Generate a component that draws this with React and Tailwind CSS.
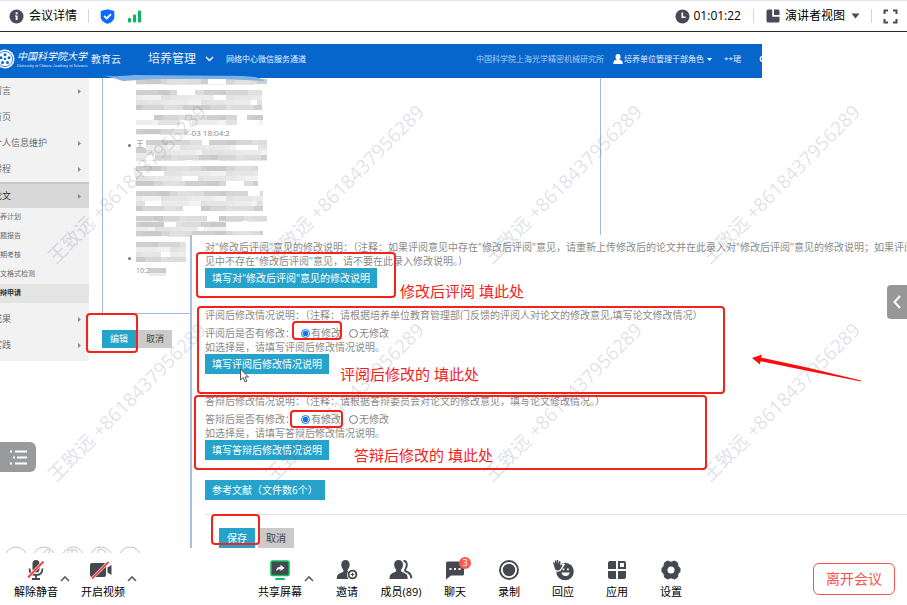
import React from "react";

const MENU = [
  { label: "留言", arrow: true },
  { label: "首页", arrow: false },
  { label: "个人信息维护", arrow: true },
  { label: "课程", arrow: true },
];
const SUBMENU = ["培养计划", "开题报告", "中期考核", "论文格式检测", "答辩申请"];
const MENU_END = ["成果", "实践"];

// Bands of blurred text: x, y, width, height
const BANDS = [
  [0, 0, 131, 6],
  [0, 11, 126, 20],
  [0, 36, 101, 10],
  [111, 36, 16, 10],
  [0, 50, 52, 6],
  [10, 61, 121, 21],
  [0, 69, 10, 13],
  [0, 87, 122, 20],
  [0, 112, 127, 20],
  [0, 137, 131, 6],
  [0, 143, 90, 9],
  [0, 152, 127, 6],
  [0, 163, 50, 20],
  [13, 189, 17, 8],
];

const LIGHT = ["#e6e6e6", "#ececec", "#e2e2e2", "#e9e9e9", "#f2f2f2"];
const DARK = ["#cfcfcf", "#d6d6d6", "#dcdcdc", "#cacaca", "#e0e0e0"];
const WIDTHS = [9, 16, 6, 22, 12, 7, 18];

function Mosaic() {
  const cells = [];
  BANDS.forEach(([x, y, w, h], b) => {
    for (let j = 0, row = 0; j < h; j += 5, row += 1) {
      const shades = row % 3 === 0 ? DARK : LIGHT;
      for (let i = 0, k = b * 3 + row * 2; i < w; k += 1) {
        const cw = Math.min(WIDTHS[k % 7], w - i);
        if ((k * 5 + row) % 13 !== 4) {
          cells.push(
            <rect
              key={b + "-" + i + "-" + j}
              x={x + i}
              y={y + j}
              width={cw}
              height={Math.min(5, h - j)}
              fill={shades[(k * 3 + b) % 5]}
            />
          );
        }
        i += cw;
      }
    }
  });
  return (
    <svg className="block" width="131" height="198" viewBox="0 0 131 198" aria-hidden="true">
      {cells}
    </svg>
  );
}

function TopBar() {
  return (
    <header className="flex h-8 shrink-0 items-center justify-between border-t border-b border-t-[#e4e6ee] border-b-[#23262e] bg-white pr-[9px] pl-[9px] text-xs text-black">
      <div className="flex items-center">
        <svg width="15" height="15" viewBox="0 0 15 15" aria-hidden="true">
          <circle cx="7.500" cy="7.500" r="7" fill="#474b57" />
          <rect x="6.600" y="3.300" width="2" height="2" fill="#fff" />
          <path d="M6 6.500h2.600v4.500H6.700V7.500H6z" fill="#fff" />
        </svg>
        <span className="ml-[5px]">会议详情</span>
        <span className="mx-[11px] h-[14px] w-px bg-[#d3d5da]" />
        <svg width="15" height="15" viewBox="0 0 15 15" aria-hidden="true">
          <path d="M7.500 0.300L14.300 2v6c0 3.400-3 5.400-6.800 6.900C3.700 13.400.7 11.400.7 8V2z" fill="#0a6cff" />
          <path d="M4.200 7l2.500 2.400L11 5.200" stroke="#fff" strokeWidth="1.800" fill="none" />
        </svg>
        <svg className="ml-3" width="15" height="13" viewBox="0 0 15 13" aria-hidden="true">
          <rect x="1" y="8" width="3" height="4.500" rx="1" fill="#07b85a" />
          <rect x="6" y="4.500" width="3" height="8" rx="1" fill="#07b85a" />
          <rect x="11" y="0.500" width="3" height="12" rx="1" fill="#07b85a" />
        </svg>
      </div>
      <div className="flex items-center">
        <svg width="15" height="15" viewBox="0 0 15 15" aria-hidden="true">
          <circle cx="7.500" cy="7.500" r="7" fill="#474b57" />
          <path d="M7.300 3.500v4.700h3.400" stroke="#fff" strokeWidth="1.600" fill="none" />
        </svg>
        <span className="ml-1">01:01:22</span>
        <span className="mx-3 h-[14px] w-px bg-[#d3d5da]" />
        <button type="button" className="flex items-center">
          <svg width="14" height="14" viewBox="0 0 14 14" aria-hidden="true">
            <path d="M2 .5h4.200v7.300H13.500V12a1.500 1.500 0 0 1-1.500 1.500H2A1.500 1.500 0 0 1 .5 12V2A1.500 1.500 0 0 1 2 .5z" fill="#474b57" />
            <path d="M8 .5h4A1.500 1.500 0 0 1 13.500 2v4H8z" fill="#474b57" />
          </svg>
          <span className="ml-[5px]">演讲者视图</span>
          <svg className="ml-[6px]" width="9" height="6" viewBox="0 0 9 6" aria-hidden="true">
            <path d="M.5.500h8L4.500 5.500z" fill="#474b57" />
          </svg>
        </button>
        <span className="mx-[11px] h-[14px] w-px bg-[#d3d5da]" />
        <button type="button" aria-label="全屏">
          <svg className="block" width="15" height="15" viewBox="0 0 15 15" fill="none" stroke="#474b57" strokeWidth="2" aria-hidden="true">
            <path d="M1.500 5V1.500H5M10 1.500h3.500V5M13.500 10v3.500H10M5 13.500H1.500V10" />
          </svg>
        </button>
      </div>
    </header>
  );
}

function Emblem() {
  return (
    <svg className="-ml-[5px] shrink-0" width="20" height="20" viewBox="0 0 20 20" aria-hidden="true">
      <circle cx="10" cy="10" r="9.500" fill="#fff" />
      <circle cx="10" cy="10" r="7.600" fill="none" stroke="#0a67cf" strokeWidth="0.800" />
      <g fill="#0a67cf">
        <circle cx="10" cy="5.800" r="1.500" />
        <circle cx="14" cy="8.700" r="1.500" />
        <circle cx="12.500" cy="13.400" r="1.500" />
        <circle cx="7.500" cy="13.400" r="1.500" />
        <circle cx="6" cy="8.700" r="1.500" />
        <circle cx="10" cy="10" r="1.200" />
      </g>
    </svg>
  );
}

function SiteBar() {
  return (
    <div className="flex h-[34px] w-[84%] items-center overflow-hidden bg-[#0766cc] pb-1 text-[8px] whitespace-nowrap text-[#e8f1fc]">
      <Emblem />
      <div className="ml-[2px] flex w-[70px] flex-col">
        <span className="text-[10px] leading-[13px] text-white italic">中国科学院大学</span>
        <span className="font-['Liberation_Serif',serif] text-[4px] leading-[5px]">University of Chinese Academy of Sciences</span>
      </div>
      <span className="ml-1 text-[10px]">教育云</span>
      <button type="button" className="ml-[27px] flex items-center text-xs">
        培养管理
        <svg className="ml-[9px]" width="9" height="6" viewBox="0 0 9 6" fill="none" stroke="#fff" strokeWidth="1.400" aria-hidden="true">
          <path d="M1 1l3.500 3.500L8 1" />
        </svg>
      </button>
      <a href="#wechat" className="ml-3">网络中心微信服务通道</a>
      <span className="ml-auto text-[#a9cbf0]">中国科学院上海光学精密机械研究所</span>
      <button type="button" className="ml-[9px] flex items-center">
        <svg width="10" height="10" viewBox="0 0 10 10" fill="#fff" aria-hidden="true">
          <ellipse cx="5" cy="3" rx="2.500" ry="2.900" />
          <path d="M.2 10c0-3 1.600-3.900 3.300-4.200h3C8.200 6.100 9.800 7 9.800 10z" />
        </svg>
        <span className="ml-px">培养单位管理干部角色</span>
        <svg className="ml-[3px]" width="5" height="3" viewBox="0 0 5 3" aria-hidden="true">
          <path d="M0 0h5L2.500 3z" fill="#fff" />
        </svg>
      </button>
      <span className="ml-3">**珺</span>
      <svg className="ml-[17px] shrink-0" width="4" height="8" viewBox="0 0 4 8" fill="none" stroke="#fff" strokeWidth="1.400" aria-hidden="true">
        <path d="M4 1.500a2.700 2.700 0 0 0 0 5" />
      </svg>
    </div>
  );
}

function MenuArrow() {
  return (
    <svg width="3" height="5" viewBox="0 0 3 5" aria-hidden="true">
      <path d="M0 0l3 2.500L0 5z" fill="#8c8c8c" />
    </svg>
  );
}

function Sidebar() {
  return (
    <nav className="flex w-[89px] shrink-0 flex-col self-start overflow-hidden bg-[#f2f2f2] pb-[3px] text-[9px] text-[#6d6d6d]">
      {MENU.map((m) => (
        <a key={m.label} href="#menu" className="flex h-[26px] items-center justify-between pr-2">
          <span className="-ml-[7px]">{m.label}</span>
          {m.arrow && <MenuArrow />}
        </a>
      ))}
      <a href="#paper" className="flex h-[26px] items-center justify-between border-t-2 border-[#c6c6c6] bg-[#d8d8d8] pr-2 text-[#333]">
        <span className="-ml-[7px]">论文</span>
        <MenuArrow />
      </a>
      <div className="flex flex-col pb-[3px] text-[7px]">
        {SUBMENU.map((s) => (
          <a
            key={s}
            href="#sub"
            className={
              s === "答辩申请"
                ? "flex h-[19px] items-center bg-[#e4e4e4] font-bold text-[#333]"
                : "flex h-[19px] items-center"
            }
          >
            <span className="-ml-[7px]">{s}</span>
          </a>
        ))}
      </div>
      {MENU_END.map((m) => (
        <a key={m} href="#menu" className="flex h-[26px] items-center justify-between pr-2">
          <span className="-ml-[7px]">{m}</span>
          <MenuArrow />
        </a>
      ))}
    </nav>
  );
}

function ReviewPage() {
  return (
    <div className="ml-[13px] w-[499px]">
      <div className="relative h-[236px] border-r border-b border-l border-[#9dbbe0] pt-px pl-[33px]">
        <Mosaic />
        <span className="absolute top-[50px] left-[86px] text-[8px] leading-[9px] text-[#8a8a8a]">-03 18:04:2</span>
        <span className="absolute top-[61px] left-[33px] text-[8px] leading-[9px] text-[#8a8a8a]">王</span>
        <span className="absolute top-[188px] left-[33px] text-[7px] leading-[10px] text-[#8a8a8a]">10:2</span>
        <span className="absolute top-[66px] left-[25px] h-[3px] w-[3px] rounded-full bg-[#777]" />
        <span className="absolute top-[179px] left-[25px] h-[3px] w-[3px] rounded-full bg-[#777]" />
      </div>
      <div className="mt-4 flex gap-[2px] text-[9px]">
        <button type="button" className="h-[18px] w-[34px] bg-[#25a3cb] text-white">编辑</button>
        <button type="button" className="h-[18px] w-[34px] bg-[#cbcbcb] text-[#444]">取消</button>
      </div>
    </div>
  );
}

function TealButton({ children }) {
  return (
    <button type="button" className="h-5 self-start bg-[#25a3cb] px-[7px] text-white">
      {children}
    </button>
  );
}

function ReviseBlock({ name, title, note, question, hint, action }) {
  return (
    <section className="flex flex-col leading-[14px]">
      <p>
        {title}
        {note}
      </p>
      <fieldset className="mt-1 flex h-[14px] items-center">
        <legend className="float-left">{question}</legend>
        <label className="ml-[6px] flex items-center gap-px">
          <input type="radio" name={name} defaultChecked className="m-0 h-[9px] w-[9px] accent-[#1673e6]" />
          有修改
        </label>
        <label className="ml-2 flex items-center gap-px">
          <input type="radio" name={name} className="m-0 h-[9px] w-[9px] accent-[#1673e6]" />
          无修改
        </label>
      </fieldset>
      <p>{hint}</p>
      <TealButton>{action}</TealButton>
    </section>
  );
}

// The edit form, pasted over the review page
function EditForm() {
  return (
    <div className="absolute top-[203px] right-0 left-[190px] flex flex-col gap-5 overflow-hidden border-l-2 border-[#a5c0e2] bg-white pt-[5px] pl-[13px] text-[10px] leading-[14px] whitespace-nowrap text-[#8a8a8a]">
      <section className="flex flex-col">
        <p>对"修改后评阅"意见的修改说明：（注释：如果评阅意见中存在"修改后评阅"意见，请重新上传修改后的论文并在此录入对"修改后评阅"意见的修改说明；如果评阅意</p>
        <p>见中不存在"修改后评阅"意见，请不要在此录入修改说明。）</p>
        <TealButton>填写对"修改后评阅"意见的修改说明</TealButton>
      </section>
      <ReviseBlock
        name="review"
        title="评阅后修改情况说明："
        note="（注释：请根据培养单位教育管理部门反馈的评阅人对论文的修改意见,填写论文修改情况）"
        question="评阅后是否有修改："
        hint="如选择是，请填写评阅后修改情况说明。"
        action="填写评阅后修改情况说明"
      />
      <ReviseBlock
        name="defense"
        title="答辩后修改情况说明："
        note="（注释：请根据答辩委员会对论文的修改意见，填写论文修改情况。）"
        question="答辩后是否有修改："
        hint="如选择是，请填写答辩后修改情况说明。"
        action="填写答辩后修改情况说明"
      />
      <TealButton>参考文献（文件数6个）</TealButton>
      <div className="-mt-[6px] flex gap-[3px] border-t border-[#e4e4e8] pt-[13px] pl-[14px]">
        <button type="button" className="h-5 w-9 bg-[#25a3cb] text-white">保存</button>
        <button type="button" className="h-5 w-9 bg-[#cbc9c9] text-[#444]">取消</button>
      </div>
    </div>
  );
}

function Watermarks() {
  return (
    <div className="pointer-events-none absolute top-[43px] left-[18px] grid auto-rows-[218px] grid-cols-[repeat(4,218px)]">
      {[0, 1, 2, 3, 4, 5, 6, 7].map((n) => (
        <div key={n} className="flex items-center justify-center">
          <span className="-rotate-45 text-[19px] whitespace-nowrap text-[#5a5f8a]/20">王致远 +8618437956289</span>
        </div>
      ))}
    </div>
  );
}

const FRAME = "absolute rounded-sm border-2 border-[#f5211b]";
const NOTE = "absolute text-[15px] leading-5 whitespace-nowrap text-[#f5211b]";

function Annotations() {
  return (
    <div className="pointer-events-none absolute inset-0">
      <div className={FRAME + " top-[220px] left-[196px] h-[46px] w-[200px]"} />
      <div className={FRAME + " top-[274px] left-[197px] h-[88px] w-[528px]"} />
      <div className={FRAME + " top-[363px] left-[194px] h-[75px] w-[513px]"} />
      <div className={FRAME + " top-[289px] left-[292px] h-[19px] w-[50px]"} />
      <div className={FRAME + " top-[378px] left-[290px] h-[18px] w-[53px]"} />
      <div className={FRAME + " top-[482px] left-[211px] h-[31px] w-[49px]"} />
      <div className={FRAME + " top-[281px] left-[86px] h-[40px] w-[52px]"} />
      <span className={NOTE + " top-[249px] left-[400px]"}>修改后评阅 填此处</span>
      <span className={NOTE + " top-[332px] left-[340px]"}>评阅后修改的 填此处</span>
      <span className={NOTE + " top-[413px] left-[354px]"}>答辩后修改的 填此处</span>
      <svg className="absolute top-[322px] left-[751px]" width="112" height="30" viewBox="0 0 112 30" aria-hidden="true">
        <path d="M1 4L11 .5l-1 3L56 13.500l54 13v1L55 16.500 9.500 7.200 9 10.500z" fill="#fd0d0a" />
      </svg>
      <svg className="absolute top-[42px] left-[103px]" width="164" height="8" viewBox="0 0 164 8" aria-hidden="true">
        <path d="M0 1.500Q14 3 32 1L140 2 152 3Q160 5 162 7L120 5 90 5 50 5 20 7Q8 3 0 1.500z" fill="#7fb0e8" />
      </svg>
      <svg className="absolute top-[336px] left-[239px]" width="11" height="15" viewBox="0 0 11 15" aria-hidden="true">
        <path d="M1.500 1v11l2.700-2.400 1.900 4.300 1.800-.8L6 9h3.500z" fill="#fff" stroke="#444" strokeWidth="0.900" />
      </svg>
    </div>
  );
}

function SharedScreen() {
  return (
    <main className="relative flex-1 overflow-hidden bg-white pt-3">
      <SiteBar />
      <div className="flex">
        <Sidebar />
        <ReviewPage />
      </div>
      <EditForm />
      <Watermarks />
      <Annotations />
      <svg className="absolute bottom-0 left-0" width="145" height="7" viewBox="0 0 145 7" fill="none" stroke="#c4c4c4" strokeWidth="1" aria-hidden="true">
        <circle cx="16" cy="12" r="11" />
        <circle cx="44" cy="12" r="11" />
        <circle cx="73" cy="12" r="11" />
        <circle cx="101" cy="12" r="11" />
        <circle cx="130" cy="12" r="11" />
        <path d="M43 7l5-4 2 2-2 2M68 7V4h9v3M72 4v3M98 7V4l3-1 4 2v2" />
      </svg>
      <button type="button" aria-label="列表" className="absolute top-[410px] left-0 flex h-[30px] w-9 items-center justify-center rounded-r-md bg-[#999a9c]">
        <svg width="17" height="15" viewBox="0 0 17 15" fill="#fff" aria-hidden="true">
          <path d="M0 .5h2v2H0zM5 .5h12v2H5zM3 6.500h2v2H3zM7 6.500h10v2H7zM0 12.500h2v2H0zM5 12.500h12v2H5z" />
        </svg>
      </button>
      <button type="button" aria-label="展开" className="absolute top-[253px] right-0 flex h-[34px] w-5 items-center justify-center rounded-l-[4px] bg-[#979797]">
        <svg width="8" height="14" viewBox="0 0 8 14" fill="none" stroke="#fff" strokeWidth="2" aria-hidden="true">
          <path d="M7 1L1.500 7 7 13" />
        </svg>
      </button>
    </main>
  );
}

const G = "#45484f";

function MicIcon() {
  return (
    <svg width="22" height="22" viewBox="0 0 22 22" aria-hidden="true">
      <rect x="7.500" y="1" width="7" height="12.500" rx="3.500" fill={G} />
      <path d="M4.500 9.500c0 4.300 2.700 6.500 6.500 6.500s6.500-2.200 6.500-6.500M11 16v4M7 20h8" stroke={G} strokeWidth="1.800" fill="none" />
      <path d="M3 18.500L18 3" stroke="#fff" strokeWidth="3" />
      <path d="M3 18.500L18.500 2.500" stroke="#f8403c" strokeWidth="1.800" />
    </svg>
  );
}

function CameraIcon() {
  return (
    <svg className="-ml-1" width="22" height="22" viewBox="0 0 22 22" aria-hidden="true">
      <rect x="0" y="4" width="16" height="14" rx="2" fill={G} />
      <path d="M17.500 8.500L21.500 6v10l-4-2.500z" fill={G} />
      <path d="M2 19.500L18 3.500" stroke="#fff" strokeWidth="3" />
      <path d="M2 19.500L18.500 3" stroke="#f8403c" strokeWidth="1.800" />
    </svg>
  );
}

function ShareIcon() {
  return (
    <svg width="22" height="22" viewBox="0 0 22 22" aria-hidden="true">
      <rect x="2" y="2" width="18" height="14.500" rx="1.500" fill={G} stroke="#0ac160" strokeWidth="1.600" />
      <path d="M7 12c.5-3 2-4.300 4.500-4.300V5.800L15.500 9l-4 3v-1.800c-2 0-3.300.5-4.500 1.800z" fill="#fff" />
      <rect x="6" y="19" width="10" height="2" rx="1" fill="#0ac160" />
    </svg>
  );
}

function InviteIcon() {
  return (
    <svg width="22" height="22" viewBox="0 0 22 22" aria-hidden="true">
      <path d="M9.500 1C12 1 13.700 2.700 13.700 5.500c0 2-.6 3.500-1.700 4.800-.6.800-.5 1.600.2 2.200-1 1.200-1.400 2.500-1.100 4.200.2 1.300.7 2.200 1.500 3.300H.8c0-4 1.200-5 3.700-6 2-.8 3-1.300 3-2.300 0-.6-.4-1-.8-1.700C5.800 8.700 5.300 7.300 5.300 5.500 5.300 2.700 7 1 9.500 1z" fill={G} />
      <circle cx="16.500" cy="15.500" r="3.900" fill="none" stroke={G} strokeWidth="1.900" />
      <path d="M16.500 13.700v3.600M14.700 15.500h3.600" stroke={G} strokeWidth="1.100" />
    </svg>
  );
}

function MembersIcon() {
  return (
    <svg width="24" height="22" viewBox="0 0 24 22" aria-hidden="true">
      <path d="M9.500 1C12.200 1 14 2.700 14 5.500c0 2-.7 3.500-1.600 4.700-.8 1.200-.5 2.200.6 2.700l2.500 1.100c2.500 1.100 3.200 2.500 3.200 6H.5c0-3.500.8-4.900 3.200-6l2.400-1.100c1.200-.5 1.500-1.500.7-2.700C5.800 9 5.200 7.500 5.200 5.500 5.200 2.700 6.900 1 9.500 1z" fill={G} />
      <path d="M14.500 1.800c2 .2 3.300 1.700 3.300 4 0 1.700-.5 3-1.300 4.200-.8 1.100-.5 1.900.5 2.400l2 1c2.400 1.200 3.200 2.800 3.400 5.800" fill="none" stroke={G} strokeWidth="1.900" />
    </svg>
  );
}

function ChatIcon() {
  return (
    <svg width="22" height="22" viewBox="0 0 22 22" aria-hidden="true">
      <path d="M3.500 2.500h15a1.500 1.500 0 0 1 1.500 1.500v11a1.500 1.500 0 0 1-1.500 1.500H7L2 20.500V4a1.500 1.500 0 0 1 1.500-1.500z" fill={G} />
      <path d="M5.500 9h2v2h-2zM10 9h2v2h-2zM14.500 9h2v2h-2z" fill="#fff" />
    </svg>
  );
}

function RecordIcon() {
  return (
    <svg width="22" height="22" viewBox="0 0 22 22" aria-hidden="true">
      <circle cx="11" cy="11" r="9" fill="none" stroke={G} strokeWidth="1.900" />
      <circle cx="11" cy="11" r="6.200" fill={G} />
    </svg>
  );
}

function ReactIcon() {
  return (
    <svg width="22" height="22" viewBox="0 0 22 22" aria-hidden="true">
      <circle cx="13" cy="12.500" r="8.800" fill={G} />
      <path d="M0 0h9.500v5.500l2-1.500 1.500 1.500-4.500 6.500L5 13 0 9z" fill="#fff" />
      <path d="M1 3.500l1.200-.5.800 2V1.500h1.300V5l.6-4h1.300l.2 4 .8-3 1.200.3v4.500L9.500 5.500l1.100.8-2.400 4.200c-1.100 1.500-4.100 1.300-5.200-.5z" fill={G} />
      <path d="M10.500 9.500h1.800v1.800h-1.800zM15 9.500h1.800v1.800H15zM9.500 13.500h8.200c-.3 2.500-2 3.500-4.100 3.500s-3.800-1-4.100-3.500z" fill="#fff" />
    </svg>
  );
}

function AppsIcon() {
  return (
    <svg width="22" height="22" viewBox="0 0 22 22" fill={G} aria-hidden="true">
      <path d="M4 2h6v8H2V4a2 2 0 0 1 2-2zM2 12h8v8H4a2 2 0 0 1-2-2zM12 12h8v6a2 2 0 0 1-2 2h-6z" />
      <path d="M13 3h5a1 1 0 0 1 1 1v5h-6z" fill="#fff" stroke={G} strokeWidth="2" />
    </svg>
  );
}

function GearIcon() {
  return (
    <svg width="22" height="22" viewBox="0 0 22 22" aria-hidden="true">
      <path
        d="M7.500 2l3.500 1.300L14.500 2l3 1.800.5 3.400L20 9.300v3.400L18 14.800l-.5 3.400-3 1.800-3.500-1.300L7.500 20l-3-1.800-.5-3.400-2-2.100V9.300l2-2.100.5-3.400z"
        fill={G}
        stroke={G}
        strokeLinejoin="round"
      />
      <circle cx="11" cy="11" r="3.500" fill="#fff" />
    </svg>
  );
}

function ToolButton({ icon, label, badge, className }) {
  return (
    <button type="button" className={"flex flex-col items-center " + className}>
      <span className="relative">
        {icon}
        {badge && (
          <span className="absolute -top-[2px] -right-[5px] flex h-3 w-3 items-center justify-center rounded-full bg-[#fb5a50] text-[9px] text-white">
            {badge}
          </span>
        )}
      </span>
      <span className="mt-[3px] text-[11px] leading-4 whitespace-nowrap">{label}</span>
    </button>
  );
}

function Caret({ label }) {
  return (
    <button type="button" aria-label={label} className="ml-[2px] self-start pt-4">
      <svg className="block" width="10" height="7" viewBox="0 0 10 7" fill="none" stroke="#5b5e66" strokeWidth="1.600" aria-hidden="true">
        <path d="M1 6l4-4 4 4" />
      </svg>
    </button>
  );
}

const TOOLS = [
  { icon: <InviteIcon />, label: "邀请" },
  { icon: <MembersIcon />, label: "成员(89)" },
  { icon: <ChatIcon />, label: "聊天", badge: "3" },
  { icon: <RecordIcon />, label: "录制" },
  { icon: <ReactIcon />, label: "回应" },
  { icon: <AppsIcon />, label: "应用" },
  { icon: <GearIcon />, label: "设置" },
];

function Toolbar() {
  return (
    <footer className="flex h-[52px] shrink-0 items-center justify-between bg-white pr-3 pl-[14px] text-black [&_svg]:block">
      <div className="flex items-center pr-[6px]">
        <ToolButton icon={<MicIcon />} label="解除静音" className="w-11" />
        <Caret label="音频选项" />
        <ToolButton icon={<CameraIcon />} label="开启视频" className="ml-[11px] w-11" />
        <Caret label="视频选项" />
      </div>
      <div className="flex items-center">
        <ToolButton icon={<ShareIcon />} label="共享屏幕" className="w-11" />
        <Caret label="共享选项" />
        <div className="ml-[6px] flex">
          {TOOLS.map((t) => (
            <ToolButton key={t.label} icon={t.icon} label={t.label} badge={t.badge} className="w-[54px]" />
          ))}
        </div>
      </div>
      <button type="button" className="h-8 w-[82px] rounded-md border border-[#fa5151] text-sm text-[#fa5151]">
        离开会议
      </button>
    </footer>
  );
}

export default function App() {
  return (
    <div className="flex min-h-screen flex-col overflow-hidden bg-white font-['Open_Sans','Noto_Sans_CJK_SC',sans-serif]">
      <TopBar />
      <SharedScreen />
      <Toolbar />
    </div>
  );
}
